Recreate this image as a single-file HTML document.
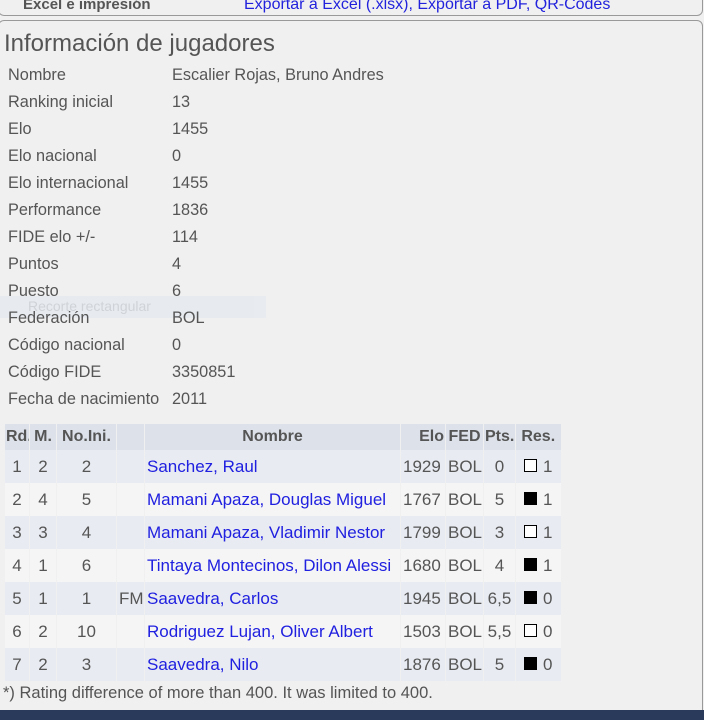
<!DOCTYPE html>
<html><head><meta charset="utf-8"><style>
body{margin:0;width:704px;height:720px;overflow:hidden;background:#f0f0f0;font-family:"Liberation Sans",sans-serif;color:#555;position:relative}
.top{position:absolute;left:-2px;top:-12px;width:703px;height:26px;border:1px solid #999;border-radius:6px;background:#f0f0f0}
.top .l{position:absolute;left:24px;top:7px;font-weight:bold;font-size:15px;color:#555}
.top .r{position:absolute;left:245px;top:7px;font-size:16px;color:#2222dd}
.box{position:absolute;left:-2px;top:20px;width:703px;height:694px;border:1px solid #999;border-radius:6px}
h1{position:absolute;left:4px;top:30px;margin:0;font-size:24px;font-weight:normal;color:#555}
.info{position:absolute;left:8px;top:64px;font-size:16.3px}
.info div{height:27px;line-height:22px;white-space:nowrap}
.info span{display:inline-block;width:164px}
.ghost{position:absolute;left:0;top:296px;width:266px;height:22px;background:#e6ebf1;opacity:.8}
.ghost span{position:absolute;left:28px;top:2px;font-size:14px;color:#c8ccd2}
table{position:absolute;left:4px;top:424px;border-collapse:collapse;font-size:17px;table-layout:fixed;width:556px}
td,th{padding:0 2px;height:33px;border-left:1px solid #f0f0f0;white-space:nowrap;overflow:hidden}
th{height:26px;background:#dde2ea;font-weight:bold;color:#555;font-size:16px;padding:0 1px}
tr.o td{background:#e8ebf1}
tr.e td{background:#f5f5f5}
td.c{text-align:center}
a{color:#2020e0;text-decoration:none}
.sq{display:inline-block;width:11px;height:11px;border:1px solid #000;margin-right:6px;vertical-align:0}
.b{background:#000}
.w{background:#fff}
.note{position:absolute;left:3px;top:684px;font-size:16.5px}
.bot{position:absolute;left:0;top:710px;width:704px;height:10px;background:#2a3a5a}
</style></head><body>
<div class="top"><span class="l">Excel e impresión</span><span class="r">Exportar a Excel (.xlsx), Exportar a PDF, QR-Codes</span></div>
<div class="box"></div>
<h1>Información de jugadores</h1>
<div class="ghost"><span>Recorte rectangular</span></div>
<div class="info">
<div><span>Nombre</span>Escalier Rojas, Bruno Andres</div>
<div><span>Ranking inicial</span>13</div>
<div><span>Elo</span>1455</div>
<div><span>Elo nacional</span>0</div>
<div><span>Elo internacional</span>1455</div>
<div><span>Performance</span>1836</div>
<div><span>FIDE elo +/-</span>114</div>
<div><span>Puntos</span>4</div>
<div><span>Puesto</span>6</div>
<div><span>Federación</span>BOL</div>
<div><span>Código nacional</span>0</div>
<div><span>Código FIDE</span>3350851</div>
<div><span>Fecha de nacimiento</span>2011</div>
</div>
<table>
<colgroup><col style="width:25px"><col style="width:27px"><col style="width:60px"><col style="width:28px"><col style="width:256px"><col style="width:45px"><col style="width:38px"><col style="width:32px"><col style="width:45px"></colgroup>
<tr><th>Rd.</th><th>M.</th><th>No.Ini.</th><th></th><th>Nombre</th><th style="text-align:right">Elo</th><th>FED</th><th>Pts.</th><th>Res.</th></tr>
<tr class="o"><td class="c">1</td><td class="c">2</td><td class="c">2</td><td></td><td><a>Sanchez, Raul</a></td><td>1929</td><td>BOL</td><td class="c">0</td><td class="c"><i class="sq w"></i>1</td></tr>
<tr class="e"><td class="c">2</td><td class="c">4</td><td class="c">5</td><td></td><td><a>Mamani Apaza, Douglas Miguel</a></td><td>1767</td><td>BOL</td><td class="c">5</td><td class="c"><i class="sq b"></i>1</td></tr>
<tr class="o"><td class="c">3</td><td class="c">3</td><td class="c">4</td><td></td><td><a>Mamani Apaza, Vladimir Nestor</a></td><td>1799</td><td>BOL</td><td class="c">3</td><td class="c"><i class="sq w"></i>1</td></tr>
<tr class="e"><td class="c">4</td><td class="c">1</td><td class="c">6</td><td></td><td><a>Tintaya Montecinos, Dilon Alessi</a></td><td>1680</td><td>BOL</td><td class="c">4</td><td class="c"><i class="sq b"></i>1</td></tr>
<tr class="o"><td class="c">5</td><td class="c">1</td><td class="c">1</td><td>FM</td><td><a>Saavedra, Carlos</a></td><td>1945</td><td>BOL</td><td class="c">6,5</td><td class="c"><i class="sq b"></i>0</td></tr>
<tr class="e"><td class="c">6</td><td class="c">2</td><td class="c">10</td><td></td><td><a>Rodriguez Lujan, Oliver Albert</a></td><td>1503</td><td>BOL</td><td class="c">5,5</td><td class="c"><i class="sq w"></i>0</td></tr>
<tr class="o"><td class="c">7</td><td class="c">2</td><td class="c">3</td><td></td><td><a>Saavedra, Nilo</a></td><td>1876</td><td>BOL</td><td class="c">5</td><td class="c"><i class="sq b"></i>0</td></tr>
</table>
<div class="note">*) Rating difference of more than 400. It was limited to 400.</div>
<div class="bot"></div>
</body></html>
